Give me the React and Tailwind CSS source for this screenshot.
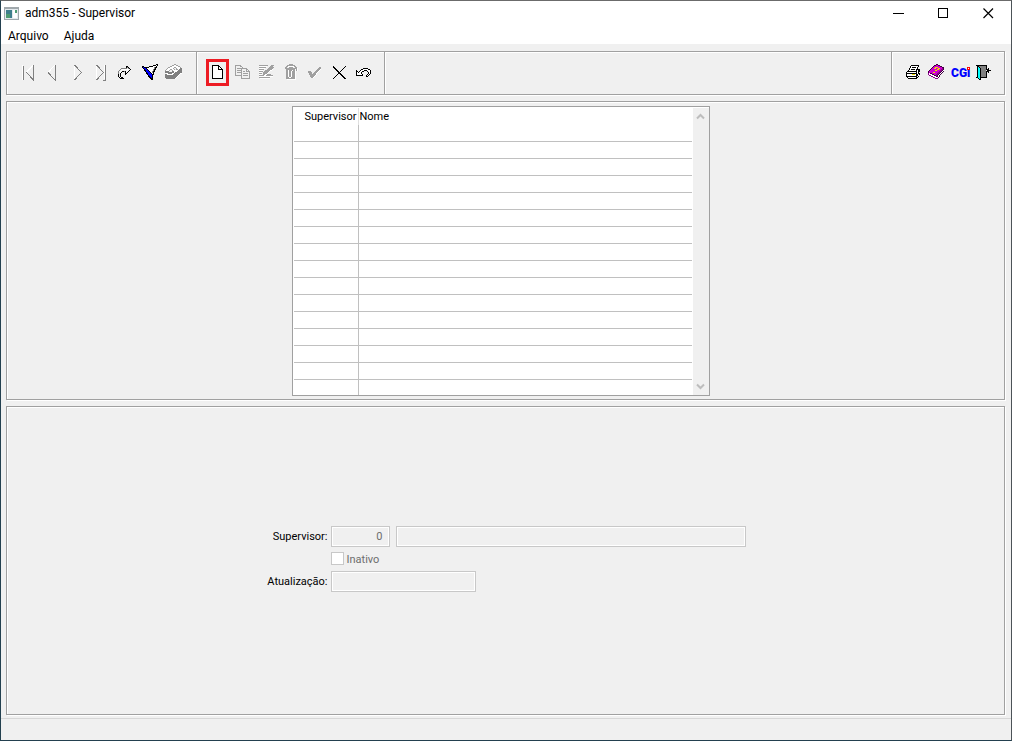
import React from "react";

const rows = Array.from({ length: 16 }, (_, i) => i);

const palette = {
  "#": "#000000",
  g: "#808080",
  l: "#a0a0a0",
  w: "#ffffff",
  b: "#0000ff",
  c: "#00ffff",
  m: "#d000d0",
  p: "#900090",
  d: "#400040",
  y: "#f0e000",
};

const Icon = ({ children }) => (
  <svg
    width="24"
    height="24"
    viewBox="0 0 24 24"
    fill="none"
    strokeWidth="1"
    shapeRendering="crispEdges"
    aria-hidden="true"
  >
    {children}
  </svg>
);

// Draws a bitmap icon, one character per pixel
const PixelIcon = ({ x, y, map }) => (
  <Icon>
    {map.flatMap((line, row) =>
      [...line].map((char, col) =>
        palette[char] ? (
          <rect
            key={`${row}-${col}`}
            x={x + col}
            y={y + row}
            width="1"
            height="1"
            fill={palette[char]}
          />
        ) : null
      )
    )}
  </Icon>
);

const FirstIcon = () => (
  <Icon>
    <path d="M6.5 5V20M17.5 5L10.5 12" stroke="#fff" />
    <path d="M7.5 6V20M17.5 5V20.500M17.500 20L10.500 12.500" stroke="#808080" />
  </Icon>
);

const PrevIcon = () => (
  <Icon>
    <path d="M15 5L8 12.500" stroke="#fff" />
    <path d="M15.500 5V20.500M15 20L8 12.500" stroke="#808080" />
  </Icon>
);

const NextIcon = () => (
  <Icon>
    <path d="M10.500 5V20" stroke="#fff" />
    <path d="M10.500 5L17.500 12.500L10.500 20" stroke="#808080" />
  </Icon>
);

const LastIcon = () => (
  <Icon>
    <path d="M8.500 5V20M16.500 5V19" stroke="#fff" />
    <path d="M8.500 5L15.500 12.500L8.500 20M17.500 5V20.500H15" stroke="#808080" />
  </Icon>
);

const goToMap = [
  "........##...",
  "........#g#..",
  "...gggggg.g#.",
  "..g.wwwwwww.#",
  ".g.w.....w.#.",
  "g.w.##g#w.#..",
  "g.w#...#.#...",
  "g.#....##....",
  "#.#....#.....",
  "#.#..........",
  "#.#..........",
  ".#.##........",
  "..####.......",
];

const filterMap = [
  "..............##",
  "...........###w#",
  "##.....####www#.",
  "#b#####wwwwwg##.",
  ".#bb#wwwwwwwg#..",
  "..#bb#wwwwwg##..",
  "..##bb#wwwwg#...",
  "...#bbb#wwg##...",
  "....#bbb#wg#....",
  "....##bbb#w#....",
  ".....#bbbb##....",
  "......#bbb#.....",
  "......##bb#.....",
  ".......##b#.....",
  "........###.....",
  ".........##.....",
];

const lookupMap = [
  ".........ll......",
  ".......llwwll....",
  ".....llwwwwwwll..",
  "...llwwwwllwwwwl.",
  "..lwwwwwl..lwwwgg",
  ".lwwwllwwl.llwggg",
  "lwwwl..lwwwwwgggg",
  "gggg...ggwwwggggg",
  "gggggggggwggggggg",
  ".wwggggwwggggggww",
  "ggwwwwwwggggggw..",
  "gggggggggggggw...",
  "ggggggggggggw....",
  "gggggggggggw.....",
  ".gggggggggw......",
];

const editMap = [
  "lllllllll...lll",
  "wwwwwwww...lll.",
  "lllllll...lllll",
  "wwwwww...lllll.",
  "lllll...lllllw.",
  "wwww..lllllww..",
  "llll.lllllw....",
  "www.lllllw.....",
  "lll.llllw......",
  "www.llwwllll...",
  "lllllwwlllllll.",
  "wwwwwwwwwwwwww.",
  "lllllllllll....",
  ".wwwwwwwwww....",
];

const trashMap = [
  ".....llll.....",
  "...llllllll...",
  "..llwwwwwwll..",
  ".ll..llll..ll.",
  ".llllllllllllw",
  "..lllllllllwlw",
  "..llwlllwllwlw",
  "..llwllwlllw..",
  "..llwllwlllw..",
  "..llwllwlllw..",
  "..llwllwlllw..",
  "..llwllwlllw..",
  "..llwllwlllw..",
  "..lllwwllllw..",
  "..lllllllllw..",
  "...wwwwwwwww..",
];

const confirmMap = [
  "...........ll",
  "..........lll",
  ".........lllw",
  "........lllw.",
  "lll....lllw..",
  "llll..lllw...",
  ".lll.lllw....",
  ".lllllllw....",
  "..lllllw.....",
  "..llllw......",
  "...llw.......",
];

const cancelMap = [
  "#...........#.",
  "##.........#..",
  ".##.......#...",
  "..##.....#....",
  "...##...#.....",
  "....##.#......",
  ".....##.......",
  ".....###......",
  "....#..##.....",
  "...#....##....",
  "..#......##...",
  ".#........##..",
  "#..........##.",
];

const undoMap = [
  ".......#####...",
  ".....##wwwww##.",
  "#...#www###www#",
  "##.#ww##...#ww#",
  "#w#ww#......#w#",
  "#wwww#......#w#",
  "#wwwww#....#w#.",
  "#######...#w#..",
  "..........##...",
];

const printMap = [
  ".....########.",
  "....#wwwwwww#.",
  "....#w####w#..",
  "...#wwwwwww#..",
  "...#w####w####",
  "..#wwwwwww#w##",
  ".##########w##",
  "#wwwwwwwww#w#.",
  "###########w##",
  "#wwwwwyyyw##w#",
  "#wwwwwwwww##..",
  "###########.#.",
  ".#wwwwwwww##..",
  "..#########...",
];

const helpMap = [
  "........dd......",
  "......ddmmdd....",
  ".....dmmmmmmdd..",
  "....dmmyyymmmmdd",
  "...dmmyymmyymmpd",
  "..dmmmmmmyymmppd",
  ".dmmmmmyymmmppdw",
  "dmmmmmmmmmmppdwd",
  "dmmmmyymmmppdwd.",
  "pwddmmmmmppdwd..",
  "pwwwddmmppdwd...",
  ".ppwwwddpdwd....",
  "...ppwwwddwd....",
  ".....ppwwwd.....",
  ".......ppp......",
];

const exitMap = [
  "###########....",
  ".##ggggggg#....",
  ".#c#gggggg#....",
  ".#cc#ggggg#.#..",
  ".#cc#ggggg###..",
  ".#cc#ggggg.####",
  ".#cc#ggggg###..",
  ".#cc#ggggg#.#..",
  ".#cc#ggggg#....",
  ".#cc#ggggg#....",
  ".#cc#ggggg#....",
  ".#cc#ggggg#....",
  "##cc#######....",
  "..#c#..........",
  "...##..........",
];

const NewIcon = () => (
  <svg
    width="17"
    height="21"
    viewBox="0 0 17 21"
    fill="none"
    shapeRendering="crispEdges"
    aria-hidden="true"
  >
    <path d="M3.500 3.500H9.500L13.500 7.500V16.500H3.500Z" fill="#fff" stroke="#000" />
    <path d="M9.500 3.500V7.500H13.500" stroke="#000" />
  </svg>
);

const CopyIcon = () => (
  <Icon>
    <path d="M6.500 5.500H11L14.500 8.500V15.500H6.500Z" fill="#f0f0f0" stroke="#a0a0a0" />
    <path d="M8 8.500H12M8 10.500H12M8 12.500H12" stroke="#a0a0a0" />
    <path d="M12.500 8.500H17.500L20.500 11.500V18.500H12.500Z" fill="#f0f0f0" stroke="#a0a0a0" />
    <path d="M17.500 8.500V11.500H20.500M14 11.500H16M14 13.500H19M14 15.500H19" stroke="#a0a0a0" />
  </Icon>
);

const CgiIcon = () => (
  <Icon>
    <text x="3" y="17" fill="#0000ff" className="font-['Roboto',sans-serif] text-[12px] font-black">
      CGi
    </text>
    <path d="M19 7H22V10H19Z" fill="#f00" />
    <path d="M20 8H21V9H20Z" fill="#fff" />
  </Icon>
);

const navActions = [
  { label: "Primeiro", icon: <FirstIcon /> },
  { label: "Anterior", icon: <PrevIcon /> },
  { label: "Seguinte", icon: <NextIcon /> },
  { label: "Último", icon: <LastIcon /> },
  { label: "Ir para", icon: <PixelIcon x={6} y={6} map={goToMap} /> },
  { label: "Filtrar", icon: <PixelIcon x={6} y={4} map={filterMap} /> },
  { label: "Consultar", icon: <PixelIcon x={5} y={4} map={lookupMap} /> },
];

const editActions = [
  { label: "Copiar", icon: <CopyIcon /> },
  { label: "Modificar", icon: <PixelIcon x={6} y={5} map={editMap} /> },
  { label: "Eliminar", icon: <PixelIcon x={7} y={4} map={trashMap} /> },
  { label: "Confirmar", icon: <PixelIcon x={7} y={7} map={confirmMap} /> },
  { label: "Cancelar", icon: <PixelIcon x={8} y={6} map={cancelMap} /> },
  { label: "Desfazer", icon: <PixelIcon x={7} y={8} map={undoMap} /> },
];

const systemActions = [
  { label: "Imprimir", icon: <PixelIcon x={6} y={5} map={printMap} /> },
  { label: "Conteúdo", icon: <PixelIcon x={4} y={4} map={helpMap} /> },
  { label: "CGI", icon: <CgiIcon /> },
  { label: "Sair", icon: <PixelIcon x={4} y={5} map={exitMap} /> },
];

const ToolButtons = ({ actions }) =>
  actions.map(({ label, icon }) => (
    <button key={label} type="button" aria-label={label} className="mt-px h-6 w-6">
      {icon}
    </button>
  ));

const TitleBar = () => (
  <header className="flex h-6 items-center bg-white pl-[3px]">
    <svg width="15" height="13" viewBox="0 0 15 13" shapeRendering="crispEdges" aria-hidden="true">
      <path d="M0 0H15V13H0Z" fill="#a0a8ac" />
      <path d="M1 2H14V12H1Z" fill="#e4eaee" />
      <path d="M2 3H8V11H2Z" fill="#3f7f8c" />
      <path d="M2 7H6V11H2Z" fill="#4d9b72" />
      <path d="M9 3H13V11H9Z" fill="#fff" />
      <path d="M11 3H13V6H11Z" fill="#4d9b72" />
    </svg>
    <h1 className="ml-1.5 text-[12px] leading-4">adm355 - Supervisor</h1>
    <div className="ml-auto flex">
      <button type="button" aria-label="Minimizar" className="flex h-6 w-[45px] items-center justify-center">
        <svg width="11" height="11" shapeRendering="crispEdges">
          <path d="M0 5.500H11" stroke="#000" />
        </svg>
      </button>
      <button type="button" aria-label="Maximizar" className="flex h-6 w-[45px] items-center justify-center">
        <svg width="11" height="11" fill="none" shapeRendering="crispEdges">
          <path d="M.5.5H9.500V9.500H.5Z" stroke="#000" />
        </svg>
      </button>
      <button type="button" aria-label="Fechar" className="flex h-6 w-[45px] items-center justify-center">
        <svg width="11" height="11">
          <path d="M.5.5L10 10M10 .5L.5 10" stroke="#000" strokeWidth="1.2" />
        </svg>
      </button>
    </div>
  </header>
);

const Toolbar = () => (
  <div
    role="toolbar"
    className="flex h-11 border border-[#a0a0a0] shadow-[1px_1px_0_#fff,inset_1px_1px_0_#fff]"
  >
    <div className="flex w-[190px] items-start border-r border-[#a0a0a0] pt-[7px] pl-[9px]">
      <ToolButtons actions={navActions} />
    </div>
    <div className="flex w-[188px] items-start border-r border-[#a0a0a0] pt-[7px] pl-[9px] shadow-[inset_1px_1px_0_#fff]">
      <button type="button" aria-label="Incluir" className="h-[27px] w-[23px] border-3 border-[#ed1c24]">
        <NewIcon />
      </button>
      <ToolButtons actions={editActions} />
    </div>
    <div className="flex-1 border-r border-[#a0a0a0] shadow-[inset_1px_1px_0_#fff]" />
    <div className="flex w-28 items-start pt-[7px] pl-2 shadow-[inset_1px_1px_0_#fff]">
      <ToolButtons actions={systemActions} />
    </div>
  </div>
);

const SupervisorTable = () => (
  <div className="flex border border-[#a0a0a0] bg-white">
    <div className="px-px pt-px">
      <table className="table-fixed border-separate border-spacing-0 leading-[17px]">
        <thead>
          <tr className="h-[17px]">
            <th className="w-[65px] border-r border-[#e0e0e0] p-0 pr-px text-right align-top font-normal">
              Supervisor
            </th>
            <th className="w-[333px] p-0 pl-px text-left align-top font-normal">Nome</th>
          </tr>
        </thead>
        <tbody>
          {rows.map((row) => (
            <tr key={row} className="group h-[17px] last:h-[15px]">
              <td className="border-r border-b border-[#c0c0c0] p-0 group-last:border-b-0" />
              <td className="border-b border-[#c0c0c0] p-0 group-last:border-b-0" />
            </tr>
          ))}
        </tbody>
      </table>
    </div>
    <div className="mt-px flex w-4 flex-col items-center justify-between bg-[#f0f0f0] py-1">
      <svg width="9" height="9" fill="none" aria-hidden="true">
        <path d="M1 6.500L4.500 3L8 6.500" stroke="#bdbdbd" strokeWidth="2" />
      </svg>
      <svg width="9" height="9" fill="none" aria-hidden="true">
        <path d="M1 2.500L4.500 6L8 2.500" stroke="#bdbdbd" strokeWidth="2" />
      </svg>
    </div>
  </div>
);

const fieldClass =
  "h-[21px] border border-[#c8c8c8] bg-[#f0f0f0] px-1.5 text-[#6d6d6d] shadow-[inset_0_0_0_1px_#fff]";

const labelClass = "w-[66px] pt-0.5 pr-[3px] text-right";

const SupervisorForm = () => (
  <form className="flex w-[482px] flex-col">
    <div className="flex items-center">
      <label htmlFor="codigo" className={labelClass}>
        Supervisor:
      </label>
      <input id="codigo" disabled defaultValue="0" className={`${fieldClass} w-[59px] text-right`} />
      <input aria-label="Nome" disabled className={`${fieldClass} ml-1.5 w-[350px]`} />
    </div>
    <div className="ml-[66px] flex h-6 items-center">
      <input
        id="inativo"
        type="checkbox"
        disabled
        className="h-[13px] w-[13px] appearance-none border border-[#c8c8c8] bg-white"
      />
      <label htmlFor="inativo" className="pt-0.5 pl-[3px] text-[#6d6d6d]">
        Inativo
      </label>
    </div>
    <div className="flex items-center">
      <label htmlFor="atualizacao" className={labelClass}>
        Atualização:
      </label>
      <input id="atualizacao" disabled className={`${fieldClass} w-[145px]`} />
    </div>
  </form>
);

const App = () => {
  return (
    <div className="flex min-h-screen flex-col border border-t-[#6b6b6b] border-r-[#4c5358] border-b-[#23404f] border-l-[#23404f] bg-[#f0f0f0] font-['Roboto',sans-serif] text-[11px] leading-4 text-black">
      <div className="bg-white">
        <TitleBar />
        <nav className="flex h-[19px] items-end gap-[15px] pl-[7px] text-[12px] leading-4">
          <button type="button">Arquivo</button>
          <button type="button">Ajuda</button>
        </nav>
      </div>
      <main className="flex flex-1 flex-col gap-1.5 pt-[7px] pr-1.5 pb-[3px] pl-[5px]">
        <Toolbar />
        <section className="flex justify-center border border-[#a0a0a0] pt-1 pr-2.5 pb-[3px] shadow-[1px_1px_0_#fff,inset_1px_1px_0_#fff]">
          <SupervisorTable />
        </section>
        <section className="flex flex-1 items-center justify-center border border-[#a0a0a0] pb-1 shadow-[1px_1px_0_#fff,inset_1px_1px_0_#fff]">
          <SupervisorForm />
        </section>
      </main>
      <footer className="h-[22px] border-t border-[#d7d7d7]" />
    </div>
  );
};

export default App;
